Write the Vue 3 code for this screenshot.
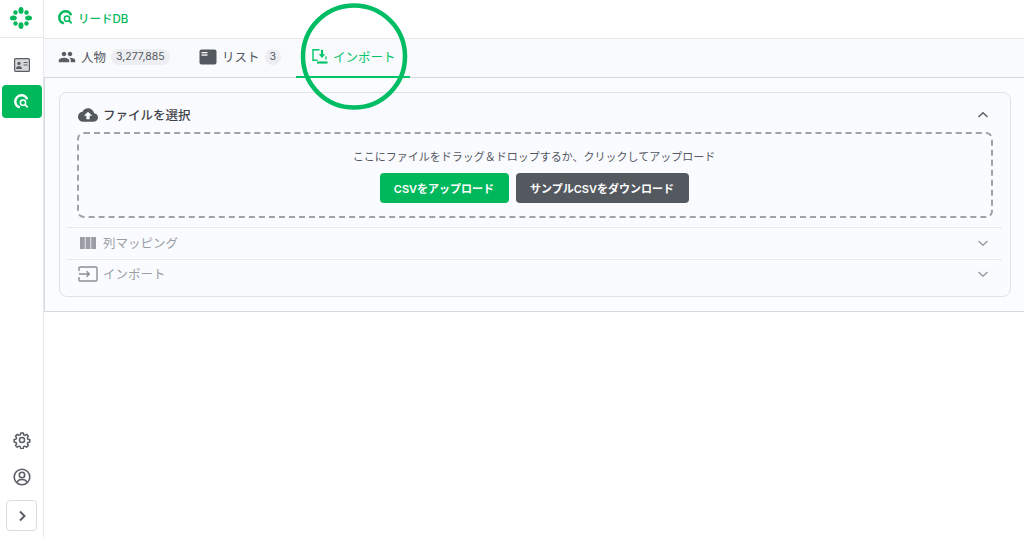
<script setup>
const tabs = [
  { key: 'people', label: '人物', badge: '3,277,885' },
  { key: 'list', label: 'リスト', badge: '3' },
  { key: 'import', label: 'インポート', active: true },
]
</script>

<template>
  <div class="app">
    <aside class="side">
      <div class="logo">
        <svg width="22" height="22" viewBox="0 0 22 22" fill="#00b85c">
          <ellipse cx="11" cy="3.400" rx="2.500" ry="3.400" />
          <ellipse cx="11" cy="18.600" rx="2.500" ry="3.400" />
          <ellipse cx="3.400" cy="11" rx="3.400" ry="2.500" />
          <ellipse cx="18.600" cy="11" rx="3.400" ry="2.500" />
          <circle cx="5.500" cy="5.500" r="2.200" />
          <circle cx="16.500" cy="5.500" r="2.200" />
          <circle cx="5.500" cy="16.500" r="2.200" />
          <circle cx="16.500" cy="16.500" r="2.200" />
        </svg>
      </div>
      <div class="nav">
        <div class="nav-item">
          <svg width="16" height="14" viewBox="0 0 16 14">
            <rect x="0.600" y="0.600" width="14.800" height="12.800" rx="1" fill="#d5d7da" stroke="#5a5e64" stroke-width="1.200" />
            <circle cx="5" cy="5.400" r="1.700" fill="#5a5e64" />
            <path d="M2 11c0-2 1.400-3 3-3s3 1 3 3z" fill="#5a5e64" />
            <path d="M9.600 4.500h4M9.600 7h4" stroke="#5a5e64" stroke-width="1.200" />
          </svg>
        </div>
        <div class="nav-item on">
          <svg width="15" height="15" viewBox="0 0 16 16" fill="none" stroke="#fff">
            <path d="M14 5.600C13 3 10.800 1.400 8 1.400 4.300 1.400 1.400 4.400 1.400 8c0 3 1.900 5.400 4.800 6.300" stroke-width="2.600" />
            <circle cx="9.600" cy="9.200" r="2.800" stroke-width="1.600" />
            <path d="M11.800 11.400l2.800 2.800" stroke-width="1.800" />
          </svg>
        </div>
      </div>
      <div class="side-bottom">
        <svg class="b-icon" width="18" height="18" viewBox="0 0 24 24" fill="none" stroke="#5a5e64" stroke-width="2">
          <path d="M10.300 2.500h3.400l.5 2.600 1.700.8 2.300-1.400 2.300 2.400-1.400 2.200.7 1.800 2.600.5v3.300l-2.600.6-.7 1.700 1.400 2.300-2.400 2.300-2.200-1.400-1.800.7-.5 2.600h-3.300l-.6-2.600-1.700-.7-2.300 1.400-2.300-2.400 1.400-2.200-.7-1.800-2.600-.5v-3.300l2.600-.6.7-1.700-1.400-2.300 2.400-2.300 2.200 1.400 1.800-.7z" stroke-linejoin="round" />
          <circle cx="12" cy="12" r="3.400" />
        </svg>
        <svg class="b-icon" width="18" height="18" viewBox="0 0 18 18" fill="none" stroke="#5a5e64" stroke-width="1.600">
          <circle cx="9" cy="9" r="7.800" />
          <circle cx="9" cy="7" r="2.700" />
          <path d="M3.800 14.400c1-2.100 3-2.900 5.200-2.900s4.200.8 5.200 2.900" />
        </svg>
        <div class="expand">
          <svg width="10" height="12" viewBox="0 0 10 12" fill="none" stroke="#5a5e64" stroke-width="2">
            <path d="M3 1.500L7.500 6 3 10.500" />
          </svg>
        </div>
      </div>
    </aside>

    <main class="main">
      <header class="top">
        <svg width="15" height="15" viewBox="0 0 16 16" fill="none" stroke="#00b85c">
          <path d="M14 5.600C13 3 10.800 1.400 8 1.400 4.300 1.400 1.400 4.400 1.400 8c0 3 1.900 5.400 4.800 6.300" stroke-width="2.600" />
          <circle cx="9.600" cy="9.200" r="2.800" stroke-width="1.600" />
          <path d="M11.800 11.400l2.800 2.800" stroke-width="1.800" />
        </svg>
        <span class="top-title">リードDB</span>
      </header>

      <nav class="tabs">
        <div v-for="t in tabs" :key="t.key" class="tab" :class="[t.key, { active: t.active }]">
          <svg v-if="t.key === 'people'" width="18" height="18" viewBox="0 0 24 24" fill="#5a5e64">
            <path d="M16 11c1.660 0 2.990-1.340 2.990-3S17.660 5 16 5s-3 1.340-3 3 1.340 3 3 3zm-8 0c1.660 0 2.990-1.340 2.990-3S9.660 5 8 5 5 6.340 5 8s1.340 3 3 3zm0 2c-2.330 0-7 1.170-7 3.500V19h14v-2.500C15 14.170 10.330 13 8 13zm8 0c-.29 0-.62.02-.97.05 1.160.84 1.970 1.970 1.970 3.450V19h6v-2.500c0-2.330-4.670-3.500-7-3.500z" />
          </svg>
          <svg v-else-if="t.key === 'list'" width="18" height="16" viewBox="0 0 18 16">
            <rect x="0.500" y="0.500" width="17" height="15" rx="2" fill="#54585f" />
            <rect x="2.500" y="3" width="6" height="1.300" fill="#fff" />
            <rect x="2.500" y="5.400" width="6" height="1.300" fill="#fff" />
          </svg>
          <svg v-else width="16" height="15" viewBox="0 0 16 15" fill="none" stroke="#00c46a" stroke-width="1.400">
            <path d="M7.500 .8H1v10.400h4.500" />
            <path d="M10 .8v5" stroke-width="2.200" />
            <path d="M6.800 5.200h6.400L10 9z" fill="#00c46a" stroke="none" />
            <path d="M14 7.500v3" />
            <path d="M5 13.500h10.500" stroke-width="2.200" />
          </svg>
          <span class="tab-label">{{ t.label }}</span>
          <span v-if="t.badge" class="badge">{{ t.badge }}</span>
        </div>
      </nav>

      <section class="panel">
        <div class="card">
          <div class="head open">
            <svg width="20" height="20" viewBox="0 0 24 24" fill="#54585f">
              <path d="M19.350 10.040C18.670 6.590 15.640 4 12 4 9.110 4 6.600 5.640 5.350 8.040 2.340 8.360 0 10.910 0 14c0 3.310 2.690 6 6 6h13c2.760 0 5-2.240 5-5 0-2.640-2.050-4.780-4.650-4.960zM14 13v4h-4v-4H7l5-5 5 5h-3z" />
            </svg>
            <span class="head-title">ファイルを選択</span>
            <svg class="chev" width="12" height="8" viewBox="0 0 12 8" fill="none" stroke="#5a5e64" stroke-width="1.500">
              <path d="M1.500 6L6 1.800 10.500 6" />
            </svg>
          </div>
          <div class="drop">
            <p class="drop-text">ここにファイルをドラッグ＆ドロップするか、クリックしてアップロード</p>
            <div class="btns">
              <button class="btn green">CSVをアップロード</button>
              <button class="btn gray">サンプルCSVをダウンロード</button>
            </div>
          </div>
          <div class="head row">
            <svg class="row-icon" width="20" height="14" viewBox="0 0 20 14" fill="#9a9ea4">
              <rect x="2" y="1" width="4.800" height="12" />
              <rect x="7.600" y="1" width="4.800" height="12" />
              <rect x="13.200" y="1" width="4.800" height="12" />
            </svg>
            <span class="row-title">列マッピング</span>
            <svg class="chev" width="12" height="8" viewBox="0 0 12 8" fill="none" stroke="#9a9ea4" stroke-width="1.500">
              <path d="M1.500 2L6 6.200 10.500 2" />
            </svg>
          </div>
          <div class="head row last">
            <svg class="row-icon" width="20" height="16" viewBox="0 0 20 16" fill="none" stroke="#8a8e94" stroke-width="1.400">
              <path d="M1 5V2.200C1 1.500 1.500 1 2.200 1h15.600c.7 0 1.200.5 1.200 1.200v11.600c0 .7-.5 1.200-1.200 1.200H2.200C1.500 15 1 14.500 1 13.800V11" />
              <path d="M1 8h10M8.500 5.300L11.300 8l-2.800 2.700" />
            </svg>
            <span class="row-title">インポート</span>
            <svg class="chev" width="12" height="8" viewBox="0 0 12 8" fill="none" stroke="#9a9ea4" stroke-width="1.500">
              <path d="M1.500 2L6 6.200 10.500 2" />
            </svg>
          </div>
        </div>
      </section>
    </main>

    <svg class="ring" width="110" height="110" viewBox="0 0 110 110" fill="none">
      <circle cx="55" cy="54.500" r="51" stroke="#00bd63" stroke-width="4.500" />
    </svg>
  </div>
</template>

<style>
html, body { margin: 0; background: #fff; }
</style>

<style scoped>
.app {
  position: relative;
  display: flex;
  width: 1024px;
  height: 537px;
  overflow: hidden;
  background: #fff;
  color: #3f4349;
  font-family: Inter, "Noto Sans CJK JP", sans-serif;
}
.side {
  box-sizing: border-box;
  flex: 0 0 44px;
  display: flex;
  flex-direction: column;
  border-right: 1px solid #e6e8ec;
}
.logo {
  box-sizing: border-box;
  height: 38px;
  padding-left: 10px;
  padding-top: 7px;
  border-bottom: 1px solid #e6e8ec;
}
.nav {
  display: flex;
  flex-direction: column;
  align-items: center;
  gap: 4px;
  padding-top: 10px;
}
.nav-item {
  display: flex;
  align-items: center;
  justify-content: center;
  width: 40px;
  height: 33px;
}
.nav-item.on {
  background: #00b85c;
  border-radius: 4px;
}
.side-bottom {
  margin-top: auto;
  display: flex;
  flex-direction: column;
  align-items: center;
  gap: 19px;
  padding-bottom: 6px;
}
.b-icon { display: block; }
.b-icon:nth-child(2) { margin-bottom: -5px; }
.expand {
  box-sizing: border-box;
  width: 31px;
  height: 31px;
  display: flex;
  align-items: center;
  justify-content: center;
  border: 1px solid #d9dde3;
  border-radius: 4px;
  background: #fff;
}
.main {
  flex: 1;
  min-width: 0;
  display: flex;
  flex-direction: column;
}
.top {
  box-sizing: border-box;
  height: 39px;
  display: flex;
  align-items: center;
  gap: 5px;
  padding: 0 0 3px 14px;
  border-bottom: 1px solid #e6e8ec;
}
.top-title {
  font-size: 11.500px;
  font-weight: 500;
  color: #00b85c;
}
.tabs {
  box-sizing: border-box;
  height: 39px;
  display: flex;
  background: #f9fafc;
  border-bottom: 1px solid #d6dae0;
}
.tab {
  box-sizing: border-box;
  height: 39px;
  display: flex;
  align-items: center;
  gap: 5px;
  padding-bottom: 4px;
  font-size: 12.500px;
  color: #54585f;
}
.tab.people { width: 155px; padding-left: 14px; }
.tab.list { width: 97px; }
.tab.import {
  width: 114px;
  padding-left: 16px;
  padding-bottom: 2px;
  color: #00c46a;
  border-bottom: 2px solid #00c46a;
}
.badge {
  display: inline-block;
  padding: 0 5px;
  height: 16px;
  line-height: 16px;
  border-radius: 8px;
  background: #eceef1;
  font-size: 10.500px;
  color: #54585f;
}
.panel {
  box-sizing: border-box;
  height: 234px;
  padding: 14px 13px 14px 14px;
  background: #fbfcfe;
  border-left: 1px solid #d6dae0;
  border-bottom: 1px solid #d6dae0;
}
.card {
  box-sizing: border-box;
  height: 205px;
  padding: 0 8px 0 7px;
  border: 1px solid #dfe3e8;
  border-radius: 8px;
  background: #fafbff;
}
.head {
  display: flex;
  align-items: center;
  gap: 5px;
  padding: 0 13px 0 11px;
}
.head.open {
  box-sizing: border-box;
  height: 39px;
  padding-top: 4px;
  gap: 5px;
  font-size: 12.500px;
}
.head-title {
  font-weight: 500;
  color: #3f4349;
}
.chev { margin-left: auto; }
.drop {
  box-sizing: border-box;
  height: 86px;
  margin: 0 9px 9px 10px;
  padding: 16px 2px 0 0;
  border: 2px dashed #9fa3a9;
  border-radius: 7px;
  text-align: center;
}
.drop-text {
  margin: 0;
  font-size: 11px;
  line-height: 15px;
  color: #54585f;
}
.btns {
  display: flex;
  justify-content: center;
  gap: 7px;
  margin-top: 8px;
}
.btn {
  height: 30px;
  padding: 0;
  border: none;
  border-radius: 4px;
  color: #fff;
  font: 600 11px Inter, "Noto Sans CJK JP", sans-serif;
}
.btn.green { width: 129px; background: #00b85c; }
.btn.gray { width: 173px; background: #54585f; }
.row {
  box-sizing: border-box;
  height: 32px;
  padding-bottom: 2px;
  border-top: 1px solid #e6e8ec;
  color: #9a9ea4;
  font-size: 12.500px;
}
.row.last { padding-bottom: 4px; }
.row-icon { flex: 0 0 auto; }
.ring {
  position: absolute;
  left: 299px;
  top: 2px;
  pointer-events: none;
}
</style>
